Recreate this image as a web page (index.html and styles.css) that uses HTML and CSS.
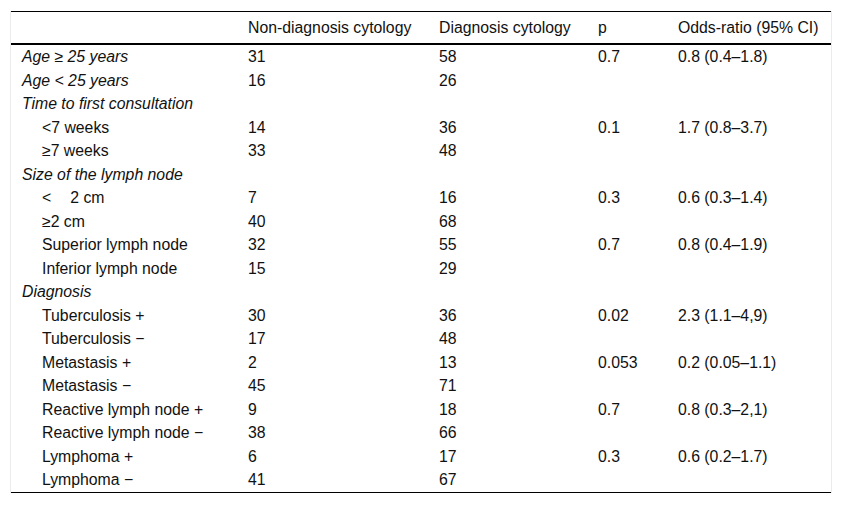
FILE: index.html
```html
<!DOCTYPE html>
<html>
<head>
<meta charset="utf-8">
<link rel="stylesheet" href="styles.css">
</head>
<body>
<div class="wrap">
<table class="tbl">
<colgroup>
<col class="c1"><col class="c2"><col class="c3"><col class="c4"><col class="c5">
</colgroup>
<thead>
<tr><th></th><th>Non-diagnosis cytology</th><th>Diagnosis cytology</th><th>p</th><th>Odds-ratio (95% CI)</th></tr>
</thead>
<tbody>
<tr><td class="it">Age ≥ 25 years</td><td>31</td><td>58</td><td>0.7</td><td>0.8 (0.4–1.8)</td></tr>
<tr><td class="it">Age &lt; 25 years</td><td>16</td><td>26</td><td></td><td></td></tr>
<tr><td class="it">Time to first consultation</td><td></td><td></td><td></td><td></td></tr>
<tr><td class="ind">&lt;7 weeks</td><td>14</td><td>36</td><td>0.1</td><td>1.7 (0.8–3.7)</td></tr>
<tr><td class="ind">≥7 weeks</td><td>33</td><td>48</td><td></td><td></td></tr>
<tr><td class="it">Size of the lymph node</td><td></td><td></td><td></td><td></td></tr>
<tr><td class="ind">&lt;<span class="gap"></span>2 cm</td><td>7</td><td>16</td><td>0.3</td><td>0.6 (0.3–1.4)</td></tr>
<tr><td class="ind">≥2 cm</td><td>40</td><td>68</td><td></td><td></td></tr>
<tr><td class="ind">Superior lymph node</td><td>32</td><td>55</td><td>0.7</td><td>0.8 (0.4–1.9)</td></tr>
<tr><td class="ind">Inferior lymph node</td><td>15</td><td>29</td><td></td><td></td></tr>
<tr><td class="it">Diagnosis</td><td></td><td></td><td></td><td></td></tr>
<tr><td class="ind">Tuberculosis +</td><td>30</td><td>36</td><td>0.02</td><td>2.3 (1.1–4,9)</td></tr>
<tr><td class="ind">Tuberculosis −</td><td>17</td><td>48</td><td></td><td></td></tr>
<tr><td class="ind">Metastasis +</td><td>2</td><td>13</td><td>0.053</td><td>0.2 (0.05–1.1)</td></tr>
<tr><td class="ind">Metastasis −</td><td>45</td><td>71</td><td></td><td></td></tr>
<tr><td class="ind">Reactive lymph node +</td><td>9</td><td>18</td><td>0.7</td><td>0.8 (0.3–2,1)</td></tr>
<tr><td class="ind">Reactive lymph node −</td><td>38</td><td>66</td><td></td><td></td></tr>
<tr><td class="ind">Lymphoma +</td><td>6</td><td>17</td><td>0.3</td><td>0.6 (0.2–1.7)</td></tr>
<tr><td class="ind">Lymphoma −</td><td>41</td><td>67</td><td></td><td></td></tr>
</tbody>
</table>
</div>
</body>
</html>
```

FILE: styles.css
```css
html, body {
  margin: 0;
  padding: 0;
  background: #fff;
}
body {
  font-family: "Liberation Sans", Arial, sans-serif;
  font-size: 15.8px;
  color: #111;
}
.wrap {
  margin: 11px 0 0 10px;
  width: 822px;
  box-sizing: border-box;
  border-left: 1px solid #ebebeb;
  border-right: 1px solid #ebebeb;
}
.tbl {
  width: 820px;
  border-collapse: collapse;
  table-layout: fixed;
  border-top: 1px solid #000;
  border-bottom: 1px solid #000;
}
.c1 { width: 226px; }
.c2 { width: 191px; }
.c3 { width: 159px; }
.c4 { width: 80px; }
.c5 { width: 164px; }
th, td {
  text-align: left;
  vertical-align: top;
  padding: 2px 0 2px 11px;
  line-height: 19.5px;
  white-space: nowrap;
  font-weight: normal;
}
th {
  padding-top: 6px;
  padding-bottom: 5.5px;
  border-bottom: 2px solid #000;
}
.it { font-style: italic; }
.ind { padding-left: 31px; }
.gap { display: inline-block; width: 19px; }
```
